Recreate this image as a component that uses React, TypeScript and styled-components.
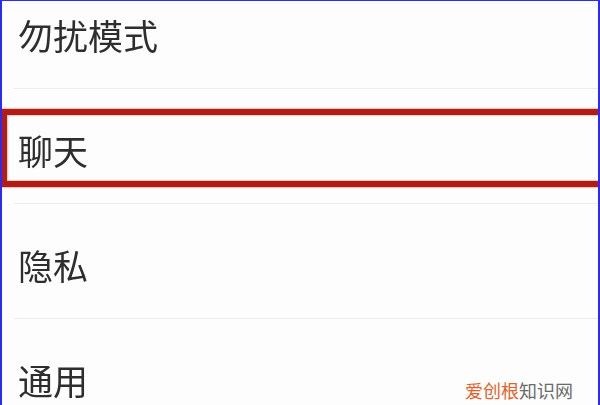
import { createGlobalStyle, styled } from "styled-components";

const GlobalStyle = createGlobalStyle`
  html, body {
    margin: 0;
    padding: 0;
    background: #ffffff;
  }
  body {
    font-family: "Noto Sans CJK SC", "Noto Sans", sans-serif;
  }
`;

const Frame = styled.div`
  position: relative;
  width: 600px;
  height: 405px;
  box-sizing: border-box;
  overflow: hidden;
  background: #fdfdfd;
  border-top: 1px solid #2b2bf5;
  border-left: 2px solid #2b2bf5;
  border-right: 2px solid #2b2bf5;
`;

const List = styled.div`
  display: flex;
  flex-direction: column;
  margin-top: -27px;
`;

interface RowProp {
  $selected?: boolean;
}

const Row = styled.div<RowProp>`
  position: relative;
  height: 115px;
  display: flex;
  align-items: center;
  margin-left: 12px;
  padding: 6px 0 0 4px;
  box-sizing: border-box;
  border-bottom: 1px solid #ececec;
  font-size: 35px;
  color: #2e2e2e;

  &::after {
    content: "";
    display: ${({ $selected }) => ($selected ? "block" : "none")};
    position: absolute;
    top: 20px;
    left: -13px;
    right: -12px;
    height: 78px;
    box-sizing: border-box;
    border: 6px solid #b11d14;
    box-shadow: 0 0 1px 1px rgba(230, 140, 130, 0.5),
      inset 0 0 1px 1px rgba(230, 140, 130, 0.5);
  }
`;

const Label = styled.span`
  line-height: 1;
  filter: blur(0.3px);
`;

const Watermark = styled.div`
  position: absolute;
  right: 25px;
  bottom: 6px;
  font-size: 18px;
  line-height: 1;
  color: #6a6a6a;

  .brand {
    color: #e2622c;
  }
`;

const items = [
  { label: "勿扰模式" },
  { label: "聊天", selected: true },
  { label: "隐私" },
  { label: "通用" },
];

function App() {
  return (
    <>
      <GlobalStyle />
      <Frame>
        <List>
          {items.map((item) => (
            <Row key={item.label} $selected={item.selected}>
              <Label>{item.label}</Label>
            </Row>
          ))}
        </List>
        <Watermark>
          <span className="brand">爱创根</span>知识网
        </Watermark>
      </Frame>
    </>
  );
}

export default App;
